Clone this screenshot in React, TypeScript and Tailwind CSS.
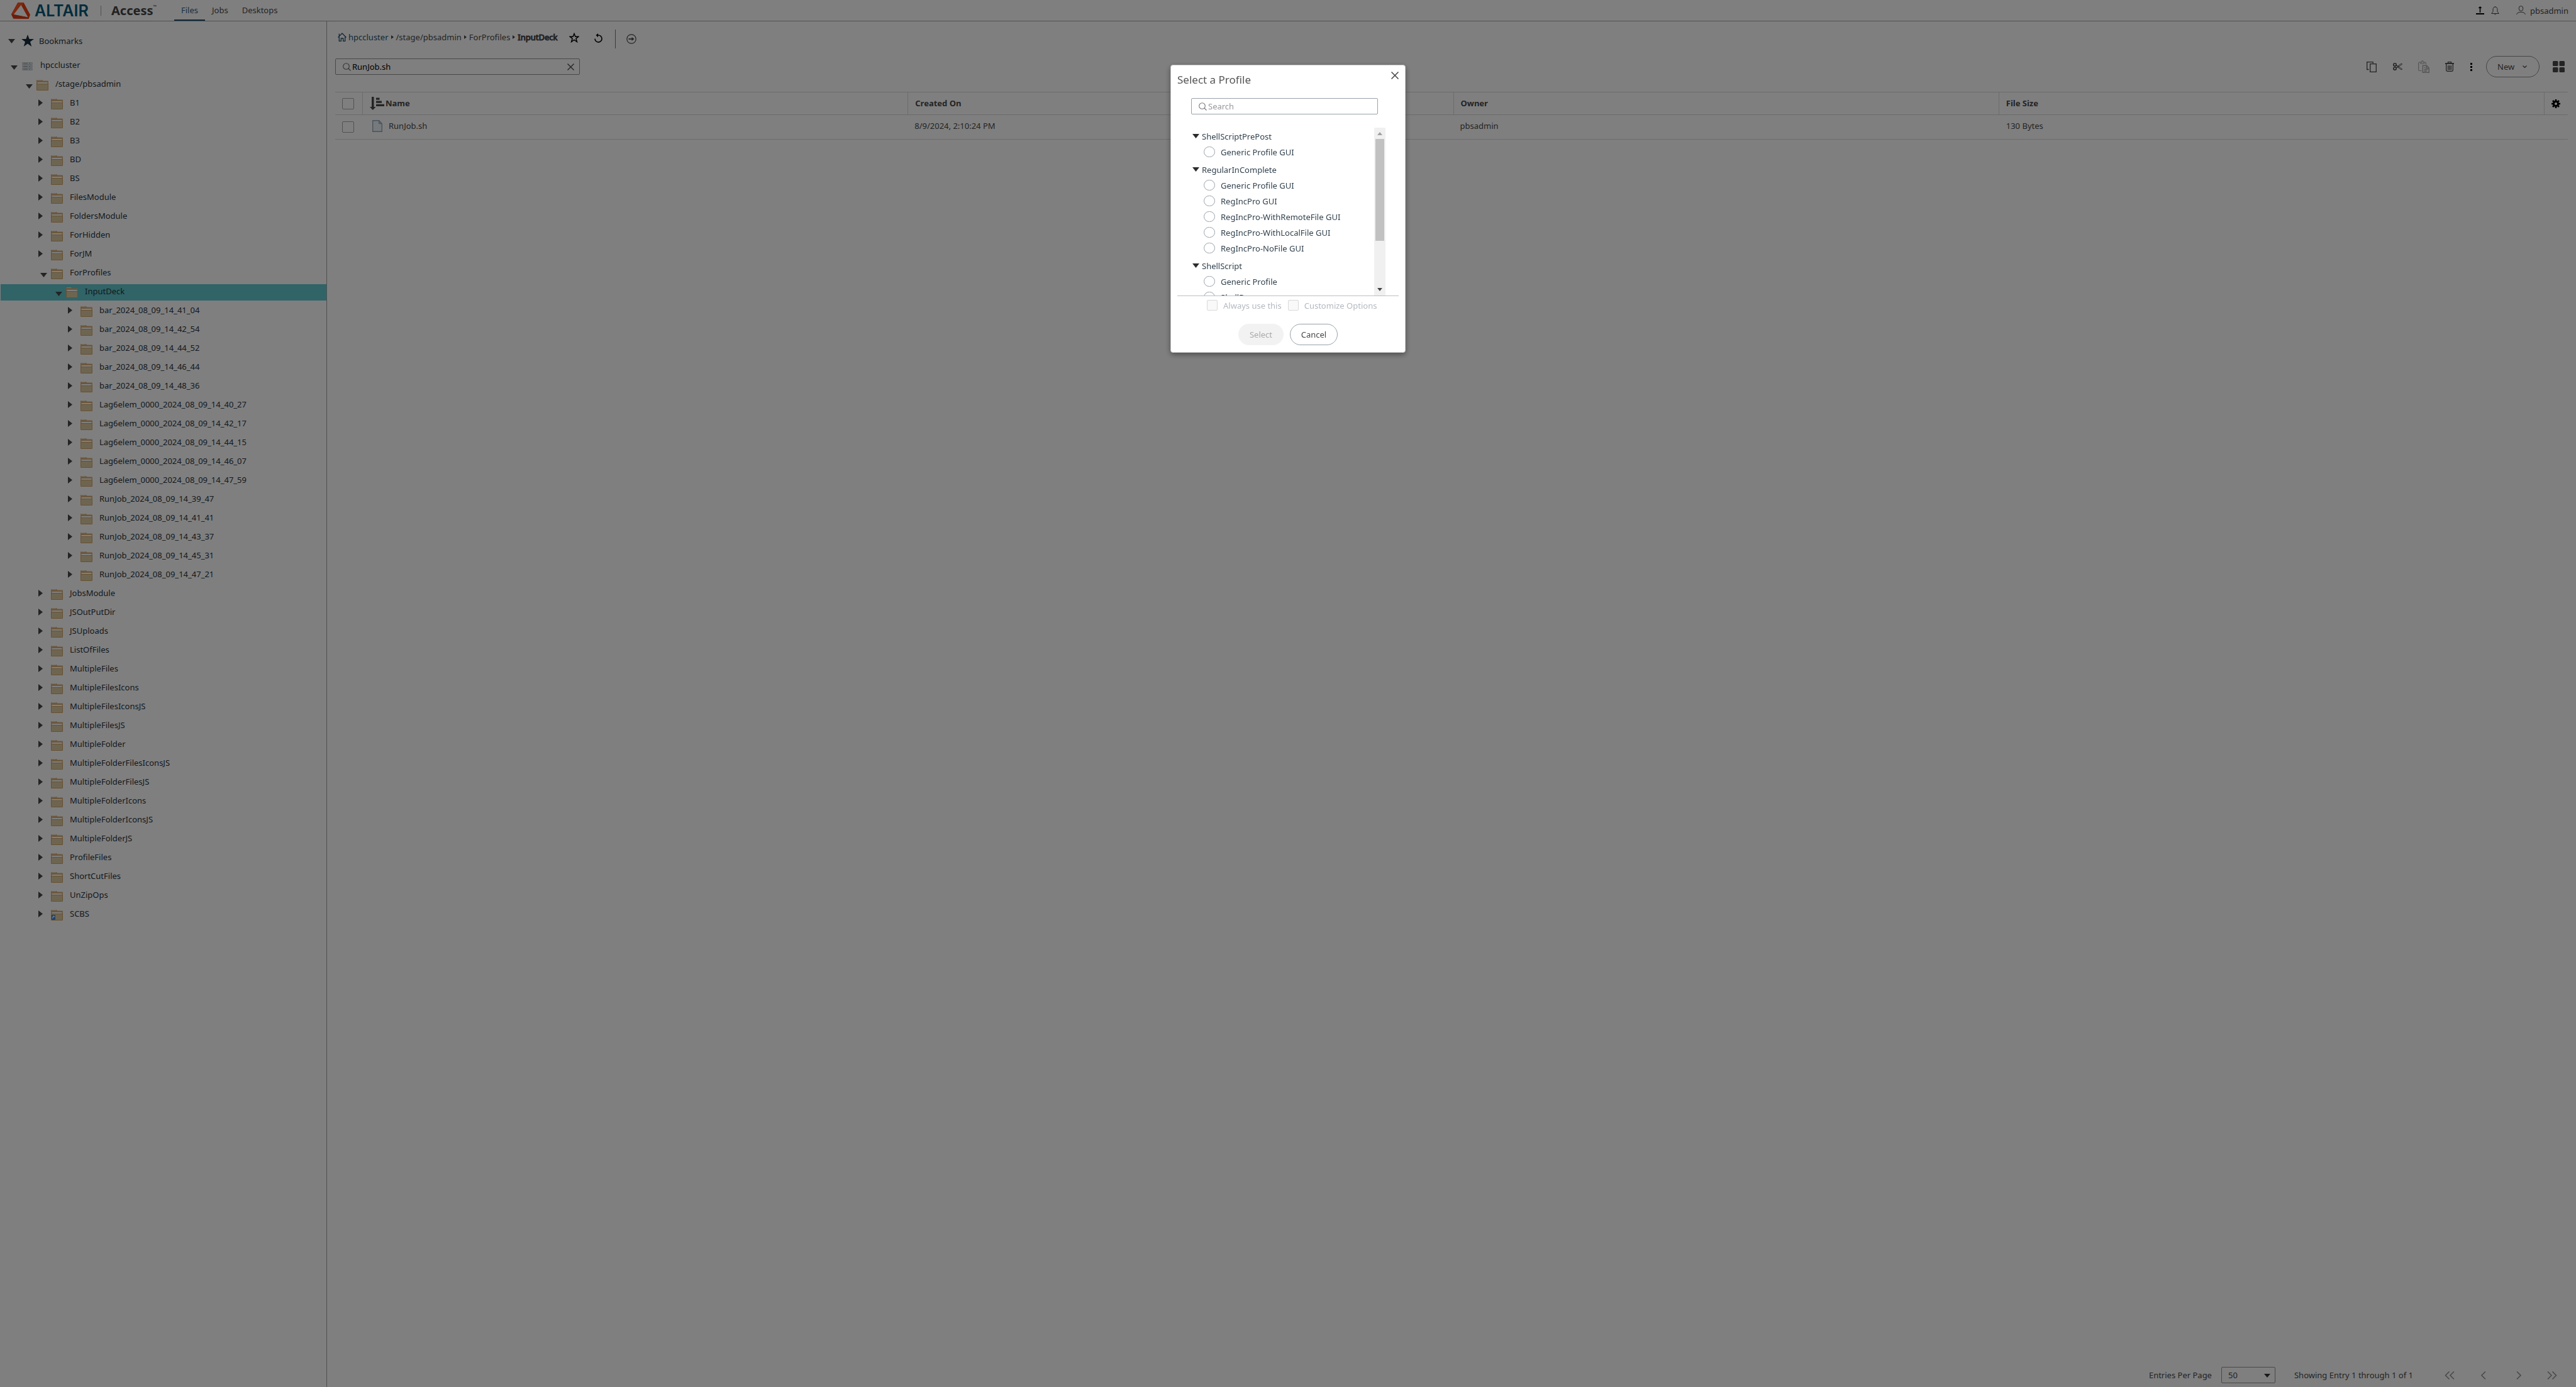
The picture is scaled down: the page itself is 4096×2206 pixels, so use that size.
import React from "react";

type NodeKind = "open" | "closed";
type TreeItem = { name: string; level: 0 | 1 | 2 | 3; kind: NodeKind; selected?: boolean; shortcut?: boolean };

const closed = (names: string[], level: 1 | 3): TreeItem[] =>
  names.map((name) => ({ name, level, kind: "closed" as NodeKind }));

const tree: TreeItem[] = [
  { name: "/stage/pbsadmin", level: 0, kind: "open" },
  ...closed(["B1", "B2", "B3", "BD", "BS", "FilesModule", "FoldersModule", "ForHidden", "ForJM"], 1),
  { name: "ForProfiles", level: 1, kind: "open" },
  { name: "InputDeck", level: 2, kind: "open", selected: true },
  ...closed(
    [
      "bar_2024_08_09_14_41_04",
      "bar_2024_08_09_14_42_54",
      "bar_2024_08_09_14_44_52",
      "bar_2024_08_09_14_46_44",
      "bar_2024_08_09_14_48_36",
      "Lag6elem_0000_2024_08_09_14_40_27",
      "Lag6elem_0000_2024_08_09_14_42_17",
      "Lag6elem_0000_2024_08_09_14_44_15",
      "Lag6elem_0000_2024_08_09_14_46_07",
      "Lag6elem_0000_2024_08_09_14_47_59",
      "RunJob_2024_08_09_14_39_47",
      "RunJob_2024_08_09_14_41_41",
      "RunJob_2024_08_09_14_43_37",
      "RunJob_2024_08_09_14_45_31",
      "RunJob_2024_08_09_14_47_21",
    ],
    3,
  ),
  ...closed(
    [
      "JobsModule",
      "JSOutPutDir",
      "JSUploads",
      "ListOfFiles",
      "MultipleFiles",
      "MultipleFilesIcons",
      "MultipleFilesIconsJS",
      "MultipleFilesJS",
      "MultipleFolder",
      "MultipleFolderFilesIconsJS",
      "MultipleFolderFilesJS",
      "MultipleFolderIcons",
      "MultipleFolderIconsJS",
      "MultipleFolderJS",
      "ProfileFiles",
      "ShortCutFiles",
      "UnZipOps",
    ],
    1,
  ),
  { name: "SCBS", level: 1, kind: "closed", shortcut: true },
];

const indent = { 0: "pl-[37px]", 1: "pl-[60px]", 2: "pl-[84px]", 3: "pl-[107px]" };

const groups = [
  { name: "ShellScriptPrePost", items: ["Generic Profile GUI"] },
  {
    name: "RegularInComplete",
    items: [
      "Generic Profile GUI",
      "RegIncPro GUI",
      "RegIncPro-WithRemoteFile GUI",
      "RegIncPro-WithLocalFile GUI",
      "RegIncPro-NoFile GUI",
    ],
  },
  { name: "ShellScript", items: ["Generic Profile", "ShellRun"] },
];

function CaretDown({ className = "" }: { className?: string }) {
  return (
    <svg className={className} width="11" height="7" viewBox="0 0 11 7" aria-hidden="true">
      <path d="M0 0h11L5.5 7z" fill="currentColor" />
    </svg>
  );
}

function CaretRight({ className = "" }: { className?: string }) {
  return (
    <svg className={className} width="7" height="11" viewBox="0 0 7 11" aria-hidden="true">
      <path d="M0 0v11L7 5.5z" fill="currentColor" />
    </svg>
  );
}

function Folder({ shortcut }: { shortcut?: boolean }) {
  return (
    <svg className="shrink-0" width="19" height="17" viewBox="0 0 19 17" aria-hidden="true">
      <path d="M1 0h8l1 1.500h8.200q.8 0 .8.800V16q0 1-1 1H1q-1 0-1-1V1q0-1 1-1z" fill="#d9ae78" />
      <path d="M1 .5h7" stroke="#efe0c8" strokeWidth="1" />
      <rect x="1.500" y="4" width="16" height="2.600" fill="#fff" />
      <path d="M.5 6.500h18V15.500q0 1-1 1H1.500q-1 0-1-1z" fill="#dccba2" stroke="#cfa060" strokeWidth="1" />
      {shortcut && (
        <>
          <rect x="1" y="8" width="6" height="8" fill="#3f84d6" />
          <path d="M2.500 14v-2q0-1.500 2-1.500M4 9.500l2 1-1.500 1.500z" fill="#fff" stroke="#fff" strokeWidth=".6" />
        </>
      )}
    </svg>
  );
}

function SearchIcon() {
  return (
    <svg width="13" height="13" viewBox="0 0 13 13" fill="none" stroke="currentColor" strokeWidth="1.100" aria-hidden="true">
      <circle cx="5.500" cy="5.500" r="4.800" />
      <path d="M9 9l3.500 3.500" />
    </svg>
  );
}

function CloseIcon({ size }: { size: number }) {
  return (
    <svg width={size} height={size} viewBox="0 0 12 12" fill="none" stroke="currentColor" strokeWidth="1.500" aria-hidden="true">
      <path d="M.5.5l11 11M11.500.5l-11 11" />
    </svg>
  );
}

function Header() {
  return (
    <header className="flex h-[34px] items-stretch border-b border-[#a3a3a3] pr-3">
      <div className="flex w-[259px] shrink-0 items-center pl-[18px]">
        <svg className="shrink-0" width="30" height="26" viewBox="35 15 101 87" aria-hidden="true">
          <path
            fillRule="evenodd"
            fill="#ea3f12"
            d="M70 15h31l35 65-8 22-82-1-11-23zM87 27L47 79l77 15z"
          />
          <path d="M70 15h31l-7 15-7-3-40 52-12-1z" fill="#fb5420" />
          <path d="M35 78l12 1 77 15 4 8-82-1z" fill="#d93c14" />
        </svg>
        <span className="ml-[7px] w-[87px] font-[Inter,sans-serif] text-[25px] leading-6 font-semibold text-[#00587a]">
          ALTAIR
        </span>
        <span className="ml-[18px] h-4 w-px bg-[#a0a0a0]" />
        <span className="ml-4 font-['Liberation_Sans_Narrow','Noto_Sans',sans-serif] text-[20px] leading-6 font-bold text-[#444]">
          Access
        </span>
        <span className="mb-3 text-[7px] leading-3 text-[#444]">™</span>
      </div>
      <nav className="ml-[18px] flex">
        <a href="#files" className="border-b-2 border-[#1d4f72] px-[11px] pt-[3px] leading-[26px] text-[#2d5f88]">
          Files
        </a>
        <a href="#jobs" className="px-[11px] pt-[3px] leading-[26px]">
          Jobs
        </a>
        <a href="#desktops" className="px-[11px] pt-[3px] leading-[26px]">
          Desktops
        </a>
      </nav>
      <div className="ml-auto flex items-center">
        <button aria-label="Uploads" className="text-black">
          <svg width="13" height="13" viewBox="0 0 13 13" aria-hidden="true">
            <path d="M0 11h13v2H0zM5.700 10V3H3.500L6.500 0l3 3H7.300v7z" fill="currentColor" />
          </svg>
        </button>
        <button aria-label="Notifications" className="ml-[11px]">
          <svg width="13" height="14" viewBox="0 0 13 14" fill="none" stroke="currentColor" aria-hidden="true">
            <path d="M6.500 1C4 1 3 3 3 5v3.500L.7 11.500h11.600L10 8.500V5c0-2-1-4-3.500-4zM6.500 0v1M5.300 12.500q1.200 1.300 2.400 0" />
          </svg>
        </button>
        <button className="ml-[27px] flex items-center gap-[7px]">
          <svg width="15" height="15" viewBox="0 0 15 15" fill="none" stroke="currentColor" aria-hidden="true">
            <ellipse cx="7.500" cy="4.500" rx="3.300" ry="4" />
            <path d="M.5 14c1-3 4-3.700 7-3.700s6 .7 7 3.700" />
          </svg>
          <span>pbsadmin</span>
        </button>
      </div>
    </header>
  );
}

function Sidebar() {
  return (
    <aside className="w-[520px] shrink-0 border-r border-[#a0a0a0] pt-4 text-[#28323c]">
      <div className="flex h-[30px] items-center pl-[13px]">
        <CaretDown className="text-[#484848]" />
        <svg className="ml-[10px]" width="20" height="20" viewBox="0 0 20 20" aria-hidden="true">
          <path d="M10 0l2.600 7H20l-6 4.500 2.300 7.500L10 14.500 3.700 19 6 11.500 0 7h7.400z" fill="#182c3c" />
        </svg>
        <span className="ml-2">Bookmarks</span>
      </div>
      <ul className="mt-[10px]">
        <li className="flex h-[30px] items-start pl-[17px] pt-[2px]">
          <button aria-label="Collapse hpccluster" className="mt-3 w-[18px] text-[#484848]">
            <CaretDown />
          </button>
          <svg className="mt-[7px]" width="17" height="13" viewBox="0 0 17 13" aria-hidden="true">
            {[0, 4.5, 9].map((y) => (
              <g key={y}>
                <rect x=".4" y={y + 0.4} width="16.200" height="3.200" rx=".6" fill="#e6eaec" stroke="#a8b0b6" strokeWidth=".7" />
                <path d={`M2 ${y + 2}h7`} stroke="#8c9499" />
                <path d={`M11 ${y + 2}h1.500`} stroke="#4d86c0" />
                <path d={`M13.500 ${y + 2}h1`} stroke="#8c9499" />
              </g>
            ))}
          </svg>
          <span className="ml-3 leading-[23px]">hpccluster</span>
        </li>
        {tree.map((n) => (
          <li key={n.name} className="h-[30px] py-[2px] pl-px">
            <div className={`flex h-[26px] items-start ${indent[n.level]} ${n.selected ? "bg-[#60c8ce]" : ""}`}>
              <button
                aria-label={n.kind === "open" ? `Collapse ${n.name}` : `Expand ${n.name}`}
                className="flex h-[26px] w-5 shrink-0 items-start text-[#484848]"
              >
                {n.kind === "open" ? <CaretDown className="mt-3 ml-[3px]" /> : <CaretRight className="mt-[6px]" />}
              </button>
              <span className="mt-[5px]">
                <Folder shortcut={n.shortcut} />
              </span>
              <span className="ml-[11px] leading-[22px]">{n.name}</span>
            </div>
          </li>
        ))}
      </ul>
    </aside>
  );
}

function Sep() {
  return (
    <svg className="mx-1" width="4" height="6" viewBox="0 0 4 6" aria-hidden="true">
      <path d="M0 0v6l4-3z" fill="#444" />
    </svg>
  );
}

function Breadcrumbs() {
  return (
    <div className="flex h-[30px] items-start pl-1">
      <nav aria-label="Breadcrumb" className="flex h-6 items-center text-[#484848]">
        <a href="#cluster" className="flex items-center gap-[3px] text-[#26506a]">
          <svg width="14" height="14" viewBox="0 0 14 14" fill="none" stroke="currentColor" strokeWidth="1.300" aria-hidden="true">
            <path d="M.5 7.500L7 1l6.500 6.500M2.300 6.500v6.800h3V9h3.400v4.300h3V6.500M2.300 5V1.500" />
          </svg>
          hpccluster
        </a>
        <Sep />
        <a href="#stage">/stage/pbsadmin</a>
        <Sep />
        <a href="#forprofiles">ForProfiles</a>
        <Sep />
        <span className="[-webkit-text-stroke:1px_#484848]">InputDeck</span>
      </nav>
      <button aria-label="Add bookmark" className="ml-[18px] mt-[5px] text-black">
        <svg width="16" height="16" viewBox="0 0 16 16" fill="none" stroke="currentColor" strokeWidth="1.500" aria-hidden="true">
          <path d="M8 1.500l1.900 4.700h4.900l-3.900 3.100 1.500 5.200L8 11.500l-4.400 3 1.500-5.200L1.200 6.200h4.900z" />
        </svg>
      </button>
      <button aria-label="Refresh" className="ml-6 mt-[6px] text-black">
        <svg width="13" height="15" viewBox="0 0 13 15" fill="none" stroke="currentColor" strokeWidth="1.600" aria-hidden="true">
          <path d="M1 8.500a5.500 5.500 0 1 0 5-5.400H4" />
          <path d="M6 0v6.200L2.500 3.100z" fill="currentColor" stroke="none" />
        </svg>
      </button>
      <span className="ml-5 h-[30px] w-px bg-[#777]" />
      <button aria-label="Go to path" className="ml-[17px] mt-[7px] text-[#484848]">
        <svg width="16" height="16" viewBox="0 0 16 16" fill="none" stroke="currentColor" strokeWidth="1.200" aria-hidden="true">
          <circle cx="8" cy="8" r="7.200" />
          <path d="M3.500 8H9" strokeWidth="1.800" />
          <path d="M8.500 5v6L12.500 8z" fill="currentColor" stroke="none" />
        </svg>
      </button>
    </div>
  );
}

function Toolbar() {
  return (
    <div className="mt-3 flex h-[34px] items-center text-[#484848]">
      <div className="flex h-[26px] w-[389px] items-center rounded-[2px] border border-[#909090] pl-[11px] pr-2">
        <span className="text-[#666]">
          <SearchIcon />
        </span>
        <input
          aria-label="Search files"
          defaultValue="RunJob.sh"
          className="ml-[2px] min-w-0 flex-1 bg-transparent text-black outline-none"
        />
        <button aria-label="Clear search">
          <CloseIcon size={11} />
        </button>
      </div>
      <div className="ml-auto flex items-center pr-[5px]">
        <button aria-label="Copy">
          <svg width="16" height="17" viewBox="0 0 16 17" fill="none" stroke="currentColor" strokeWidth="1.300" aria-hidden="true">
            <path d="M3.500 12.500H.7V.7h9.500v2M5.700 3.700h9.600v12.600H5.700z" />
          </svg>
        </button>
        <button aria-label="Cut" className="mb-px ml-[26px]">
          <svg width="15" height="12" viewBox="0 0 15 12" fill="none" stroke="currentColor" aria-hidden="true">
            <ellipse cx="3" cy="2.900" rx="2.200" ry="2.100" strokeWidth="1.600" />
            <ellipse cx="3" cy="9.100" rx="2.200" ry="2.100" strokeWidth="1.600" />
            <path d="M5 4.200l2.200 1.300L13 1.200q1.500 0 1.700 1L6 7.800M5 7.800l2.200-1.300L13 10.800q1.500 0 1.700-1L6 4.200" strokeWidth=".9" />
          </svg>
        </button>
        <button aria-label="Paste" disabled className="ml-[25px] text-[#aaa]">
          <svg width="18" height="20" viewBox="0 0 18 20" fill="none" stroke="currentColor" strokeWidth="1.200" aria-hidden="true">
            <path d="M5.500 16.500H2.200Q.7 16.500.7 15V4.500Q.7 3 2.200 3H4M9.500 3h1.300q1.500 0 1.500 1.500v2M4 5V3h1.300q.2-2.300 1.500-2.300T8.300 3h1.200v2z" />
            <path d="M7.300 8.300h6.200l3.700 3.700v7.300H7.300zM13 8.500v4h4M9.300 11.500h2M9.300 14.500h6M9.300 17h4.500" strokeWidth="1.400" />
          </svg>
        </button>
        <button aria-label="Delete" className="ml-[25px]">
          <svg width="14" height="16" viewBox="0 0 14 16" fill="none" stroke="currentColor" strokeWidth="1.300" aria-hidden="true">
            <path d="M4.500 2V.7h5V2M0 3.300h14" />
            <path d="M0 2.200h14V4H0z" fill="currentColor" stroke="none" />
            <path d="M1.700 4v9.500q0 1.800 1.800 1.800h7q1.800 0 1.800-1.800V4M4.700 6v7.500M7 6v7.500M9.300 6v7.500" />
          </svg>
        </button>
        <button aria-label="More actions" className="ml-[26px] text-black">
          <svg width="3" height="13" viewBox="0 0 3 13" fill="currentColor" aria-hidden="true">
            <path d="M0 0h3v3H0zM0 5h3v3H0zM0 10h3v3H0z" />
          </svg>
        </button>
        <button className="ml-[22px] flex h-[34px] w-[85px] items-center rounded-full border border-[#8c8c8c] pl-[17px]">
          New
          <svg className="ml-[13px]" width="7" height="4" viewBox="0 0 7 4" fill="none" stroke="currentColor" strokeWidth="1.200" aria-hidden="true">
            <path d="M.5.5l3 3 3-3" />
          </svg>
        </button>
        <button aria-label="Grid view" className="ml-[21px]">
          <svg width="19" height="18" viewBox="0 0 19 18" fill="currentColor" aria-hidden="true">
            <rect width="8.500" height="8" rx="1.500" />
            <rect x="10.500" width="8.500" height="8" rx="1.500" />
            <rect y="10" width="8.500" height="8" rx="1.500" />
            <rect x="10.500" y="10" width="8.500" height="8" rx="1.500" />
          </svg>
        </button>
      </div>
    </div>
  );
}

function FileTable() {
  const box = "block h-[18px] w-[19px] appearance-none rounded-[2px] border border-[#a5a5a5]";
  const head = "border-r border-[#d9d9d9] pb-px pl-[11px] text-left font-bold";
  return (
    <table className="mt-[23px] w-full table-fixed border-separate border-spacing-0 text-[#484848]">
      <colgroup>
        <col className="w-[44px]" />
        <col />
        <col />
        <col />
        <col />
        <col className="w-[37px]" />
      </colgroup>
      <thead>
        <tr className="h-[37px] *:border-y *:border-[#d9d9d9]">
          <th className="border-r pl-[11px]">
            <input type="checkbox" aria-label="Select all files" className={box} />
          </th>
          <th className={head}>
            <span className="flex items-center gap-[2px]">
              <svg width="23" height="21" viewBox="0 0 23 21" fill="currentColor" aria-hidden="true">
                <path d="M3 0h3.500v16H9.500L4.800 21 0 16h3zM10 1.500h5.500v3.200H10zM10 6.500h9v3.300h-9zM10 11.700h13V15H10z" />
              </svg>
              Name
            </span>
          </th>
          <th className={head}>Created On</th>
          <th className={head}>Owner</th>
          <th className={head}>File Size</th>
          <th>
            <button aria-label="Column settings" className="block pl-[11px] text-black">
              <svg width="14" height="14" viewBox="0 0 14 14" aria-hidden="true">
                <circle cx="7" cy="7" r="3.600" fill="none" stroke="currentColor" strokeWidth="3" />
                <path
                  d="M7 0v3M7 11v3M0 7h3M11 7h3M2 2l2 2M10 10l2 2M12 2l-2 2M4 10l-2 2"
                  stroke="currentColor"
                  strokeWidth="2.600"
                />
              </svg>
            </button>
          </th>
        </tr>
      </thead>
      <tbody>
        <tr className="h-[39px] *:border-b *:border-[#d9d9d9]">
          <td className="pl-[11px]">
            <input type="checkbox" aria-label="Select RunJob.sh" className={box} />
          </td>
          <td className="pb-1 pl-[15px]">
            <span className="flex items-center gap-[10px]">
              <svg width="16" height="19" viewBox="0 0 16 19" aria-hidden="true">
                <path d="M.7.7h10l4.600 5v12.600H.7z" fill="#eef4f8" stroke="#92a6b8" strokeWidth="1.400" />
                <path d="M10.500.7v5h4.800z" fill="#b8c8d6" stroke="#92a6b8" />
              </svg>
              RunJob.sh
            </span>
          </td>
          <td className="pb-1 pl-[10px]">8/9/2024, 2:10:24 PM</td>
          <td className="pb-1 pl-[10px]">pbsadmin</td>
          <td className="pb-1 pl-[11px]">130 Bytes</td>
          <td />
        </tr>
      </tbody>
    </table>
  );
}

function PageButton({ label, double, flip, className }: { label: string; double?: boolean; flip?: boolean; className: string }) {
  return (
    <button aria-label={label} className={className}>
      <svg
        className={flip ? "rotate-180" : ""}
        width={double ? 16 : 8}
        height="13"
        viewBox={double ? "0 0 16 13" : "0 0 8 13"}
        fill="none"
        stroke="#969696"
        strokeWidth="1.600"
        aria-hidden="true"
      >
        <path d={double ? "M7.500.5l-6 6 6 6M15 .5l-6 6 6 6" : "M7 .5l-6 6 6 6"} />
      </svg>
    </button>
  );
}

function Pagination() {
  return (
    <div className="mt-auto mb-[6px] flex h-[26px] items-center justify-end pr-1 text-[#484848]">
      <label htmlFor="per-page">Entries Per Page</label>
      <div className="relative ml-[15px]">
        <select
          id="per-page"
          className="h-[26px] w-[86px] appearance-none rounded-[2px] border border-[#909090] bg-transparent pl-[10px]"
        >
          <option>50</option>
        </select>
        <svg className="pointer-events-none absolute top-[11px] right-2" width="10" height="6" viewBox="0 0 10 6" aria-hidden="true">
          <path d="M0 0h10L5 6z" fill="#333" />
        </svg>
      </div>
      <span className="ml-[30px]">Showing Entry 1 through 1 of 1</span>
      <PageButton label="First page" double className="ml-[50px]" />
      <PageButton label="Previous page" className="ml-[42px]" />
      <PageButton label="Next page" flip className="ml-12" />
      <PageButton label="Last page" double flip className="ml-[41px] mr-[13px]" />
    </div>
  );
}

function ProfileDialog() {
  return (
    <div className="fixed inset-0 flex items-start justify-center bg-black/50 pt-[103px]">
      <section
        role="dialog"
        aria-labelledby="dialog-title"
        className="relative flex w-[374px] flex-col rounded-[4px] border border-[#c8c8c8] bg-white px-[10px] pb-[11px] shadow-[0_3px_8px_rgba(0,0,0,0.4)]"
      >
        <button aria-label="Close" className="absolute top-[10px] right-[10px] text-[#444]">
          <CloseIcon size={12} />
        </button>
        <h2 id="dialog-title" className="pt-[10px] text-[17px] leading-[26px] text-[#555]">
          Select a Profile
        </h2>
        <div className="mt-4 ml-[22px] flex h-[26px] w-[297px] items-center rounded-[2px] border border-[#98a2aa] pl-[11px] text-[#777]">
          <SearchIcon />
          <input
            aria-label="Search profiles"
            placeholder="Search"
            className="ml-[2px] min-w-0 flex-1 bg-transparent outline-none placeholder:text-[#999]"
          />
        </div>
        <div className="mt-[21px] flex h-[268px] border-b border-[#b8c0c8] pr-[21px] pl-6">
          <div className="flex-1 overflow-hidden pt-[2px] text-[#33434f]">
            {groups.map((g) => (
              <fieldset key={g.name} className="mb-1">
                <legend className="flex h-6 items-center">
                  <CaretDown className="mb-[2px] text-[#2c2c2c]" />
                  <span className="ml-1">{g.name}</span>
                </legend>
                {g.items.map((item) => (
                  <label key={item} className="flex h-[25px] items-center pl-[18px]">
                    <input
                      type="radio"
                      name="profile"
                      className="h-[17px] w-[18px] appearance-none rounded-full border border-[#98a2aa]"
                    />
                    <span className="ml-[9px]">{item}</span>
                  </label>
                ))}
              </fieldset>
            ))}
          </div>
          <div className="flex w-[18px] flex-col items-center bg-[#f0f0f0] py-[7px]">
            <svg width="8" height="5" viewBox="0 0 8 5" aria-hidden="true">
              <path d="M0 5h8L4 0z" fill="#a0a0a0" />
            </svg>
            <span className="mt-[6px] h-[162px] w-[14px] bg-[#c1c1c1]" />
            <CaretDown className="mt-auto h-[5px] w-2 text-[#444]" />
          </div>
        </div>
        <div className="mt-[6px] flex h-[17px] items-center pl-[47px] text-[#b4bac0]">
          <label className="flex items-center gap-[9px]">
            <input type="checkbox" disabled className="size-[17px] appearance-none rounded-[2px] border border-[#dadada] bg-[#f9f9f9]" />
            Always use this
          </label>
          <label className="ml-[10px] flex items-center gap-[9px]">
            <input type="checkbox" disabled className="size-[17px] appearance-none rounded-[2px] border border-[#dadada] bg-[#f9f9f9]" />
            Customize Options
          </label>
        </div>
        <div className="mt-[21px] flex justify-center gap-[10px]">
          <button disabled className="h-[34px] w-[72px] rounded-full bg-[#f2f2f2] text-[#aaa]">
            Select
          </button>
          <button className="h-[34px] w-[76px] rounded-full border border-[#98a2aa] text-[#484848]">Cancel</button>
        </div>
      </section>
    </div>
  );
}

export default function App() {
  return (
    <div className="flex min-h-screen flex-col bg-white font-['Noto_Sans',sans-serif] text-[13px] leading-5 text-[#484848]">
      <Header />
      <div className="flex flex-1">
        <Sidebar />
        <main className="flex min-w-0 flex-1 flex-col px-[13px] pt-[13px]">
          <Breadcrumbs />
          <Toolbar />
          <FileTable />
          <Pagination />
        </main>
      </div>
      <ProfileDialog />
    </div>
  );
}
